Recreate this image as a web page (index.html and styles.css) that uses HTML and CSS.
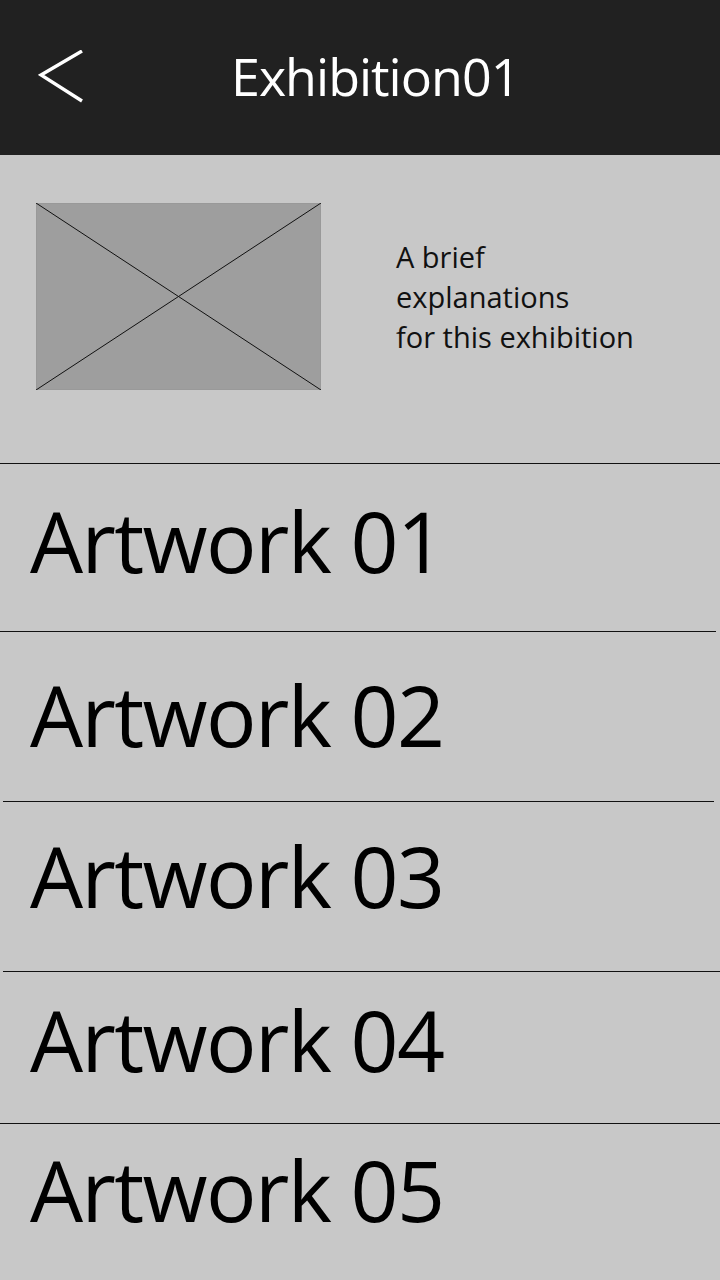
FILE: index.html
```html
<!DOCTYPE html>
<html lang="en">
<head>
<meta charset="utf-8">
<title>Exhibition01</title>
<link rel="stylesheet" href="styles.css">
</head>
<body>
<header class="topbar">
  <a class="back" href="#" aria-label="Back">
    <svg width="46" height="54" viewBox="0 0 46 54"><polyline points="44,1 3,25 44,51" fill="none" stroke="#fff" stroke-width="3.4"/></svg>
  </a>
  <h1 class="title">Exhibition01</h1>
</header>
<main class="content">
  <section class="intro">
    <div class="thumb">
      <svg width="285" height="187" viewBox="0 0 285 187" preserveAspectRatio="none">
        <rect x="0.5" y="0.5" width="284" height="186" fill="#9e9e9e" stroke="#999"/>
        <line x1="0" y1="0" x2="285" y2="187" stroke="#111" stroke-width="1"/>
        <line x1="0" y1="187" x2="285" y2="0" stroke="#111" stroke-width="1"/>
      </svg>
    </div>
    <p class="desc">A brief<br>explanations<br>for this exhibition</p>
  </section>
  <div class="divider"></div>
  <div class="row row-1"><span class="label">Artwork 01</span></div>
  <div class="divider divider-r4"></div>
  <div class="row row-2"><span class="label">Artwork 02</span></div>
  <div class="divider divider-mid"></div>
  <div class="row row-3"><span class="label">Artwork 03</span></div>
  <div class="divider divider-l3"></div>
  <div class="row row-4"><span class="label">Artwork 04</span></div>
  <div class="divider"></div>
  <div class="row row-5"><span class="label">Artwork 05</span></div>
</main>
</body>
</html>
```
FILE: styles.css
```css
* { box-sizing: border-box; }
html, body { margin: 0; padding: 0; }
body {
  width: 720px;
  height: 1280px;
  overflow: hidden;
  background: #c8c8c8;
  font-family: "Open Sans", "Noto Sans", sans-serif;
  color: #000;
}
.topbar {
  height: 155px;
  background: #212121;
  display: flex;
  align-items: center;
}
.back {
  display: flex;
  margin-left: 38px;
  margin-top: -1px;
}
.title {
  margin: -4px 0 0 147px;
  color: #fff;
  font-weight: 400;
  font-size: 52px;
  letter-spacing: -1px;
  line-height: 1;
}
.intro {
  height: 308px;
  display: flex;
  align-items: flex-start;
  padding: 48px 0 0 36px;
}
.thumb { display: flex; }
.desc {
  margin: 34px 0 0 75px;
  font-size: 29px;
  line-height: 40px;
  color: #111;
}
.divider {
  height: 1px;
  background: #111;
}
.divider-r4 { margin-right: 4px; }
.divider-mid { margin: 0 6px 0 3px; }
.divider-l3 { margin-left: 3px; }
.row {
  padding-left: 30px;
}
.row-1 { height: 167px; padding-top: 35px; }
.row-2 { height: 169px; padding-top: 41px; }
.row-3 { height: 169px; padding-top: 32px; }
.row-4 { height: 151px; padding-top: 26px; }
.row-5 { height: 160px; padding-top: 24px; }
.label {
  display: block;
  font-size: 84px;
  letter-spacing: -1.6px;
  line-height: 1;
}
```
